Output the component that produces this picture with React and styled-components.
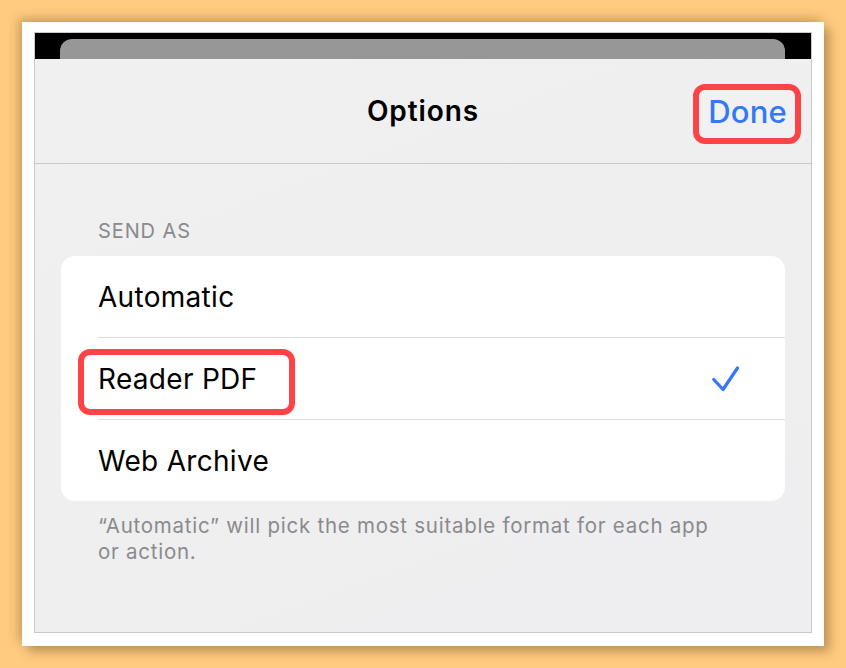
import React from "react";
import styled, { createGlobalStyle } from "styled-components";

const Global = createGlobalStyle`
  html, body { margin: 0; padding: 0; }
  body {
    background: #fecb80;
    font-family: Inter, "Noto Sans", "Liberation Sans", sans-serif;
    -webkit-font-smoothing: antialiased;
  }
`;

const Page = styled.div`
  width: 846px;
  height: 668px;
  padding: 22px;
  box-sizing: border-box;
`;

const Frame = styled.div`
  width: 802px;
  height: 624px;
  box-sizing: border-box;
  background: #fff;
  padding: 10px 12px 13px 12px;
  box-shadow: -4px -4px 10px rgba(90, 60, 20, 0.28), 6px 6px 10px rgba(90, 60, 20, 0.35);
  display: flex;
`;

const Screen = styled.div`
  flex: 1;
  border: 1px solid #c9c9c9;
  display: flex;
  flex-direction: column;
  overflow: hidden;
`;

const TopStrip = styled.div`
  height: 26px;
  background: #000;
  padding: 6px 26px 0 25px;
  box-sizing: border-box;
  display: flex;
`;

const BehindCard = styled.div`
  flex: 1;
  background: #979797;
  border-radius: 12px 12px 0 0;
`;

const Sheet = styled.div`
  flex: 1;
  background: linear-gradient(160deg, #f0f0f0 0%, #eeeef0 100%);
  display: flex;
  flex-direction: column;
`;

const Header = styled.div`
  height: 104px;
  border-bottom: 1px solid #c8c8ca;
  display: grid;
  grid-template-columns: 1fr auto 1fr;
  align-items: center;
`;

const Title = styled.div`
  grid-column: 2;
  font-size: 28px;
  font-weight: 600;
  color: #000;
  letter-spacing: 0.9px;
`;

const DoneBox = styled.div`
  grid-column: 3;
  justify-self: end;
  margin-right: 10px;
  margin-top: 6px;
  border: 6px solid #fe4347;
  border-radius: 12px;
  padding: 0 8px 5px 9px;
  height: 43px;
  box-sizing: content-box;
  display: flex;
  align-items: center;
  font-size: 31px;
  font-weight: 500;
  letter-spacing: 0.2px;
  color: #3478f6;
  background: #f1f1f2;
`;

const Body = styled.div`
  padding: 55px 26px 0 26px;
  display: flex;
  flex-direction: column;
`;

const SectionLabel = styled.div`
  padding-left: 37px;
  font-size: 20px;
  line-height: 24px;
  color: #8a8a8e;
  letter-spacing: 0.9px;
  margin-bottom: 13px;
`;

const Card = styled.div`
  background: #fff;
  border-radius: 14px;
  overflow: hidden;
`;

const Row = styled.div`
  position: relative;
  height: 81px;
  display: flex;
  align-items: center;
  justify-content: space-between;
  padding: 0 46px 0 37px;
  font-size: 28px;
  letter-spacing: 0.3px;
  color: #000;
  &:not(:last-child) {
    height: 82px;
  }
  &:not(:last-child)::after {
    content: "";
    position: absolute;
    left: 37px;
    right: 0;
    bottom: 0;
    height: 1px;
    background: #dedede;
  }
`;

const RowLabel = styled.span`
  position: relative;
  z-index: 1;
`;

const Highlight = styled.div`
  position: absolute;
  left: 17px;
  top: 11px;
  width: 217px;
  height: 66px;
  box-sizing: border-box;
  border: 6px solid #fe4347;
  border-radius: 12px;
`;

const Footer = styled.div`
  padding: 12px 60px 0 37px;
  font-size: 20.5px;
  line-height: 26px;
  letter-spacing: 0.75px;
  color: #8a8a8e;
`;

const Check = () => (
  <svg width="27" height="27" viewBox="0 0 27 27" fill="none">
    <path
      d="M1.8 13.5 L11 23.5 L25.5 2"
      stroke="#3478f6"
      strokeWidth="3.2"
      strokeLinecap="round"
      strokeLinejoin="round"
    />
  </svg>
);

const options = [
  { label: "Automatic" },
  { label: "Reader PDF", selected: true, highlight: true },
  { label: "Web Archive" },
];

export default function App() {
  return (
    <>
      <Global />
      <Page>
        <Frame>
          <Screen>
            <TopStrip>
              <BehindCard />
            </TopStrip>
            <Sheet>
              <Header>
                <Title>Options</Title>
                <DoneBox>Done</DoneBox>
              </Header>
              <Body>
                <SectionLabel>SEND AS</SectionLabel>
                <Card>
                  {options.map((o) => (
                    <Row key={o.label}>
                      {o.highlight && <Highlight />}
                      <RowLabel>{o.label}</RowLabel>
                      {o.selected && <Check />}
                    </Row>
                  ))}
                </Card>
                <Footer>
                  “Automatic” will pick the most suitable format for each app or action.
                </Footer>
              </Body>
            </Sheet>
          </Screen>
        </Frame>
      </Page>
    </>
  );
}
